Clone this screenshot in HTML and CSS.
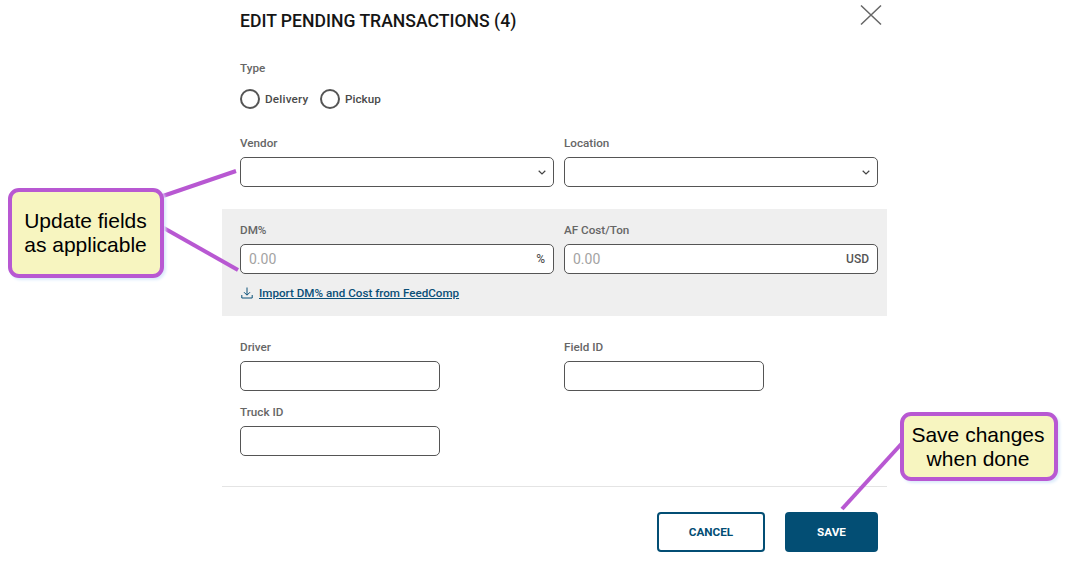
FILE: index.html
```html
<!DOCTYPE html>
<html lang="en">
	<head>
		<title>Edit pending transactions</title>
		<link rel="stylesheet" href="styles.css">
	</head>
	<body>
		<div class="modal">
			<div class="head">
				<h1 class="title">EDIT PENDING TRANSACTIONS (4)</h1>
				<svg class="close" width="22" height="22" viewBox="0 0 22 22"><path d="M1 1.5L21 20.5M21 1.5L1 20.5"/></svg>
			</div>

			<div class="label">Type</div>
			<div class="radios">
				<span class="radio"></span><span class="radio-text radio-delivery">Delivery</span>
				<span class="radio"></span><span class="radio-text">Pickup</span>
			</div>

			<div class="row row-select">
				<div>
					<div class="label">Vendor</div>
					<div class="box">
						<svg class="chevron" width="8" height="5" viewBox="0 0 8 5"><path d="M0.7 0.8L4 4L7.3 0.8"/></svg>
					</div>
				</div>
				<div>
					<div class="label">Location</div>
					<div class="box">
						<svg class="chevron" width="8" height="5" viewBox="0 0 8 5"><path d="M0.7 0.8L4 4L7.3 0.8"/></svg>
					</div>
				</div>
			</div>

			<div class="band">
				<div class="row">
					<div>
						<div class="label">DM%</div>
						<div class="box"><span class="holder">0.00</span><span class="unit">%</span></div>
					</div>
					<div>
						<div class="label">AF Cost/Ton</div>
						<div class="box"><span class="holder">0.00</span><span class="unit">USD</span></div>
					</div>
				</div>
				<div class="import">
					<svg width="12" height="12" viewBox="0 0 12 12"><path d="M6 0.5V8M3 5.2L6 8.2L9 5.2M0.8 8V11H11.2V8"/></svg>
					<a class="import-link">Import DM% and Cost from FeedComp</a>
				</div>
			</div>

			<div class="row">
				<div>
					<div class="label">Driver</div>
					<div class="box box-short"></div>
				</div>
				<div>
					<div class="label">Field ID</div>
					<div class="box box-short"></div>
				</div>
			</div>
			<div class="row row-truck">
				<div>
					<div class="label">Truck ID</div>
					<div class="box box-short"></div>
				</div>
			</div>

			<div class="foot">
				<button class="btn btn-cancel">CANCEL</button>
				<button class="btn btn-save">SAVE</button>
			</div>
		</div>

		<!-- callouts sit on top of the form -->
		<svg class="lines" width="1070" height="567" viewBox="0 0 1070 567">
			<path d="M160 197L236 171"/>
			<path d="M162 227L238 270"/>
			<path d="M842 509L904 441"/>
		</svg>
		<div class="callout callout-fields">Update fields<br>as applicable</div>
		<div class="callout callout-save">Save changes<br>when done</div>
	</body>
</html>
```

FILE: styles.css
```css
* {
	margin: 0;
	padding: 0;
	box-sizing: border-box;
}

body {
	background-color: #fff;
	font-family: Roboto, "Liberation Sans", sans-serif;
	overflow: hidden;
}

.modal {
	width: 665px;
	margin-left: 222px;
	padding: 0 9px 0 18px;
}

.head {
	display: flex;
	justify-content: space-between;
	height: 61px;
}

.title {
	padding-top: 11px;
	font-size: 17.6px;
	line-height: 20px;
	font-weight: 500;
	color: #151515;
}

.close {
	margin: 4px -4px 0 0;
}

.close path {
	fill: none;
	stroke: #666;
	stroke-width: 1.5;
}

.label {
	height: 14px;
	font-size: 11.7px;
	line-height: 14px;
	font-weight: 500;
	color: #666;
}

.radios {
	display: flex;
	align-items: center;
	height: 20px;
	margin-top: 14px;
}

.radio {
	width: 20px;
	height: 20px;
	border: 2px solid #555;
	border-radius: 50%;
}

.radio-text {
	margin: 0 0 0 5px;
	font-size: 11.7px;
	font-weight: 500;
	color: #4a4a4a;
}

.radio-delivery {
	width: 45px;
	margin-right: 10px;
	letter-spacing: 0.2px;
}

.row {
	display: grid;
	grid-template-columns: 314px 314px;
	column-gap: 10px;
}

.row-select {
	margin-top: 27px;
}

.row-truck {
	margin-top: 14px;
}

.box {
	display: flex;
	align-items: center;
	justify-content: space-between;
	height: 30px;
	margin-top: 7px;
	padding: 0 8px;
	background-color: #fff;
	border: 1px solid #555;
	border-radius: 5px;
}

.box-short {
	width: 200px;
}

.chevron {
	margin-left: auto;
	margin-right: -1px;
}

.chevron path {
	fill: none;
	stroke: #444;
	stroke-width: 1.2;
}

.holder {
	font-size: 14px;
	color: #a3a3a3;
}

.unit {
	font-size: 12px;
	font-weight: 500;
	color: #555;
}

.band {
	height: 107px;
	margin: 22px -9px 24px -18px;
	padding: 14px 9px 0 18px;
	background-color: #efefef;
}

.import {
	display: flex;
	align-items: center;
	gap: 6px;
	height: 14px;
	margin-top: 12px;
	padding-left: 1px;
}

.import svg path {
	fill: none;
	stroke: #0a5078;
	stroke-width: 1;
}

.import-link {
	font-size: 11.65px;
	line-height: 14px;
	font-weight: 500;
	color: #0a5078;
	text-decoration: underline;
}

.foot {
	display: flex;
	justify-content: flex-end;
	gap: 20px;
	height: 66px;
	margin: 30px -9px 0 -18px;
	padding: 25px 9px 0 0;
	border-top: 1px solid #e4e4e4;
}

.btn {
	height: 40px;
	border-radius: 4px;
	font-family: inherit;
	font-size: 11.7px;
	font-weight: 700;
	cursor: pointer;
}

.btn-cancel {
	width: 108px;
	background-color: #fff;
	border: 2px solid #034e74;
	color: #034e74;
}

.btn-save {
	width: 93px;
	background-color: #034e74;
	border: 0;
	color: #fff;
}

.lines {
	position: absolute;
	top: 0;
	left: 0;
}

.lines path {
	fill: none;
	stroke: #b858d2;
	stroke-width: 4;
}

.callout {
	position: absolute;
	display: flex;
	align-items: center;
	justify-content: center;
	text-align: center;
	background-color: #f7f5c0;
	border: 4px solid #b858d2;
	border-radius: 11px;
	box-shadow: 2px 2px 3px #dcebfb;
	font-family: "Liberation Sans", Arial, sans-serif;
	font-size: 21px;
	line-height: 24px;
	color: #000;
}

.callout-fields {
	top: 188px;
	left: 8px;
	width: 156px;
	height: 90px;
	padding-right: 1px;
}

.callout-save {
	top: 412px;
	left: 900px;
	width: 158px;
	height: 69px;
	padding-right: 2px;
}
```
